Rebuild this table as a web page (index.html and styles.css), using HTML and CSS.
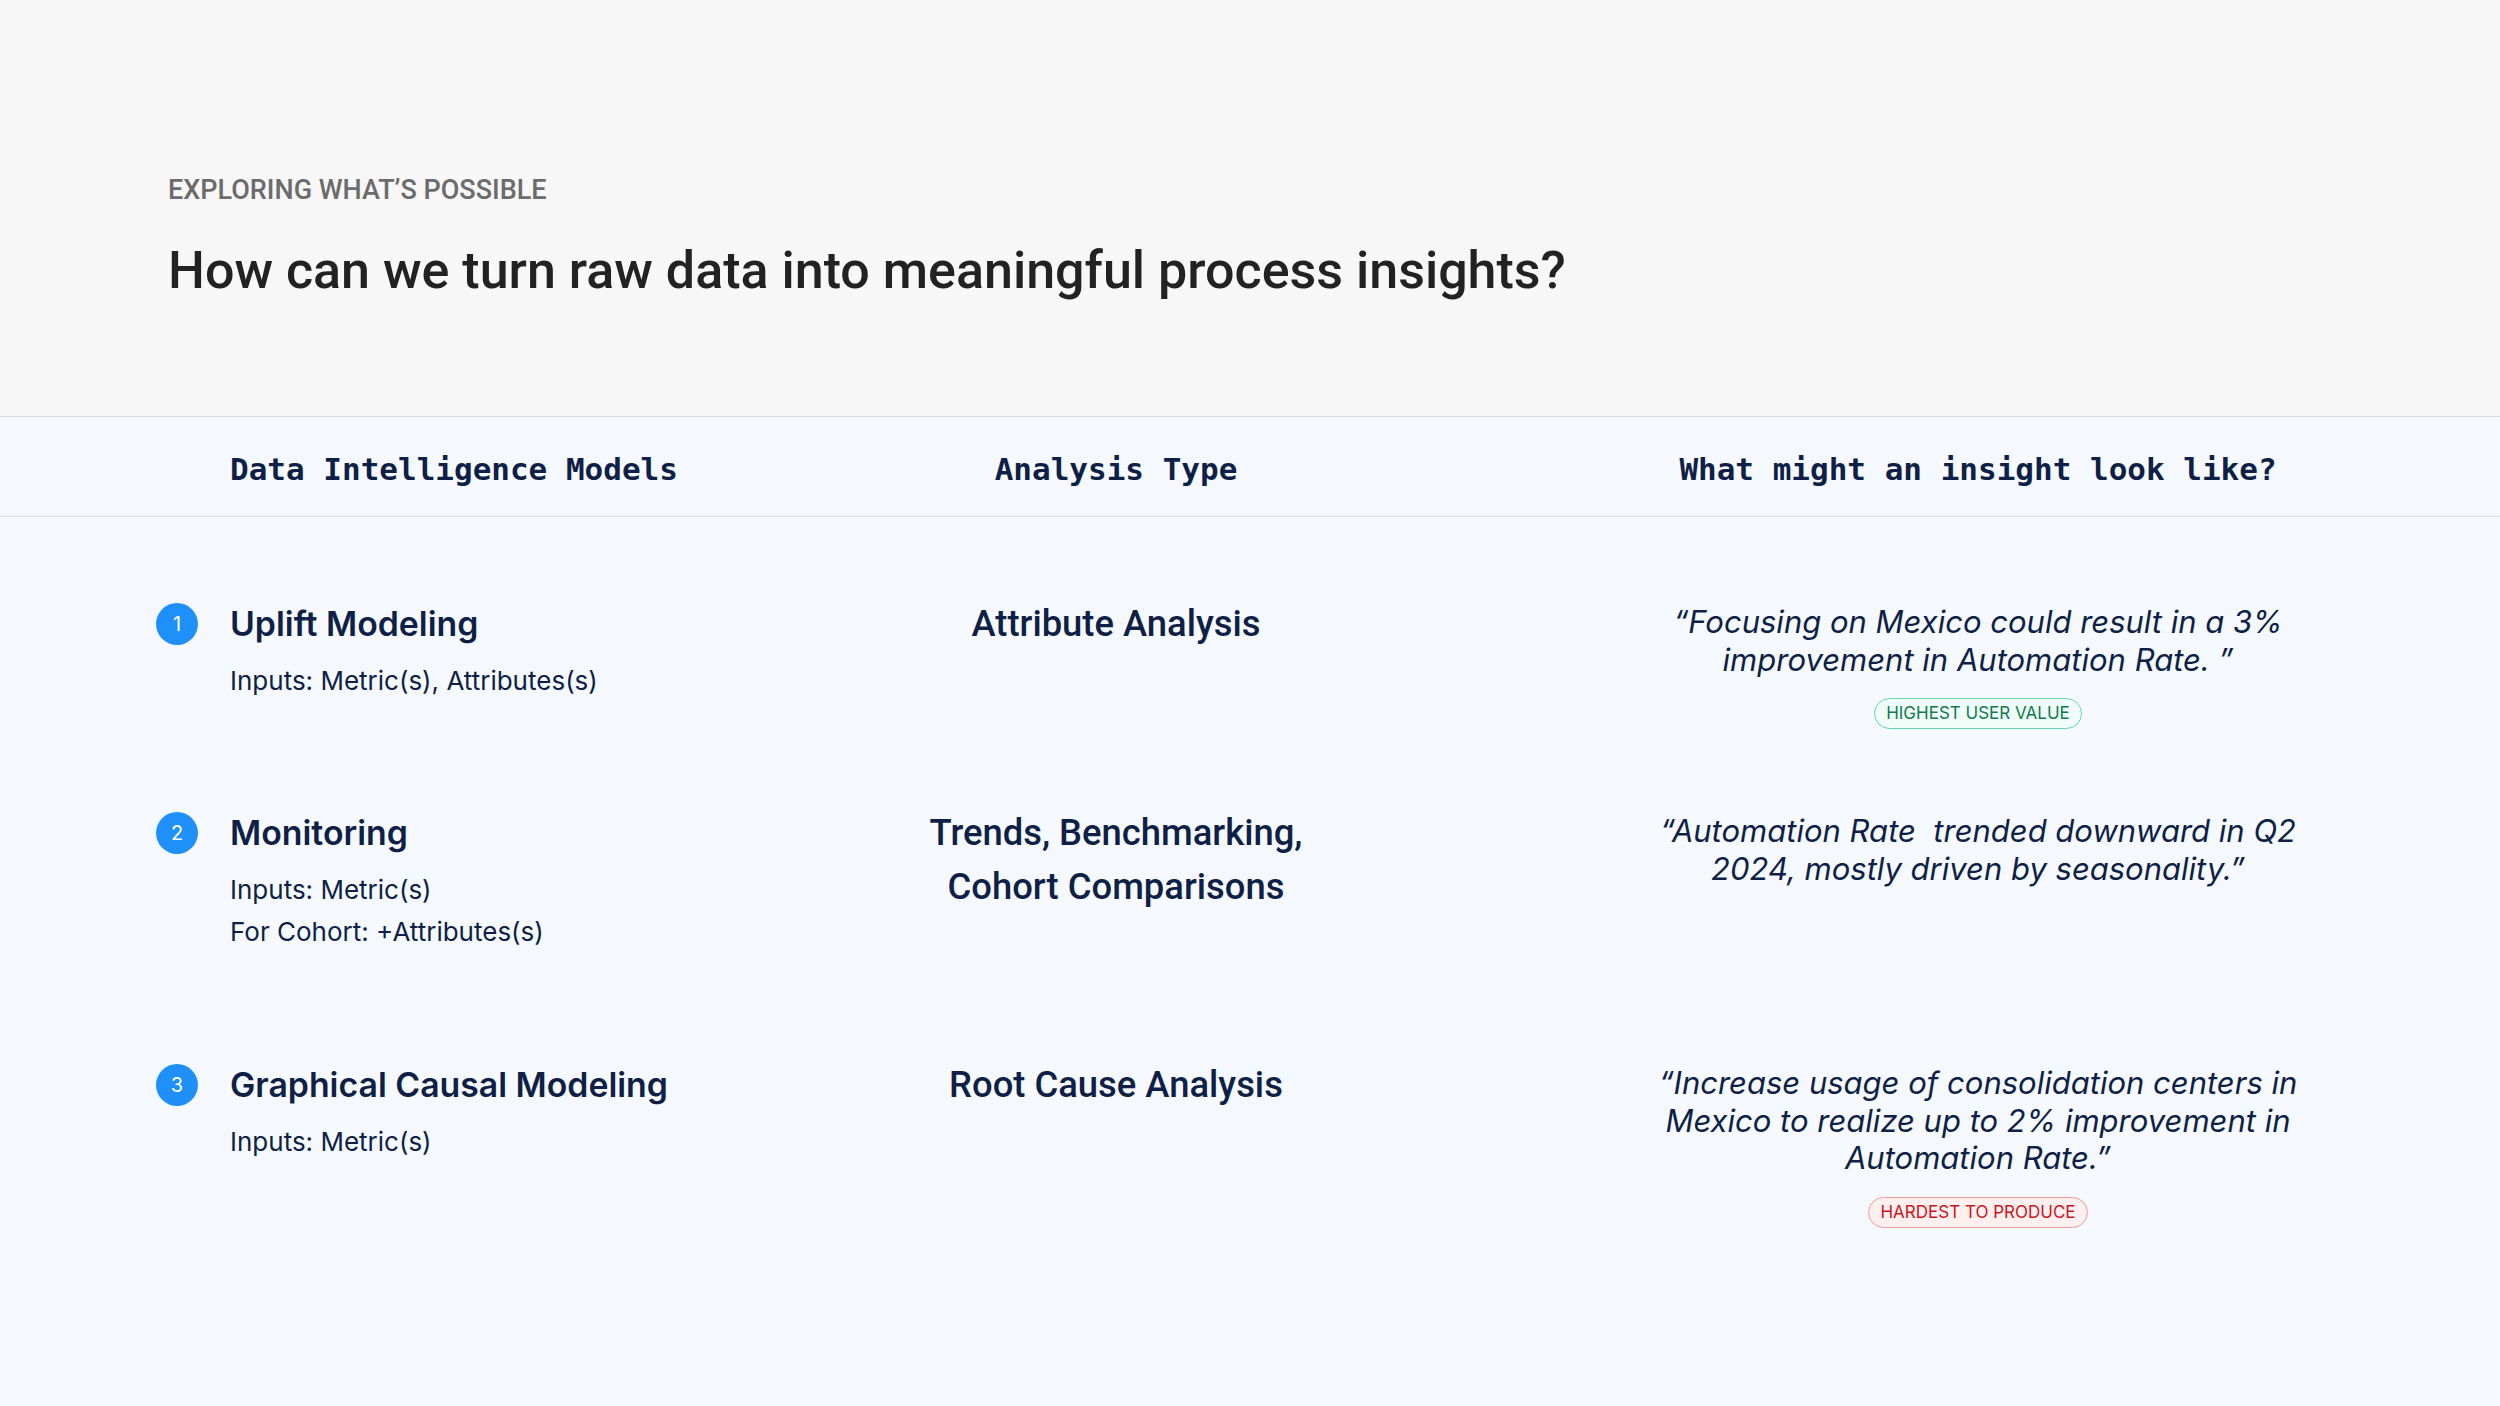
FILE: index.html
```html
<!DOCTYPE html>
<html lang="en">
<head>
<meta charset="utf-8">
<title>Exploring what's possible</title>
<link rel="stylesheet" href="styles.css">
</head>
<body>
<header class="intro">
  <p class="eyebrow">EXPLORING WHAT’S POSSIBLE</p>
  <h1 class="title">How can we turn raw data into meaningful process insights?</h1>
</header>
<main class="board">
  <div class="head-row">
    <div class="head-cell head-first">Data Intelligence Models</div>
    <div class="head-cell head-center">Analysis Type</div>
    <div class="head-cell head-center">What might an insight look like?</div>
  </div>
  <div class="rows">
    <div class="model">
      <span class="num">1</span>
      <div class="model-body">
        <h2 class="model-name">Uplift Modeling</h2>
        <p class="inputs">Inputs: Metric(s), Attributes(s)</p>
      </div>
    </div>
    <div class="analysis">Attribute Analysis</div>
    <div class="insight">
      <p class="quote">“Focusing on Mexico could result in a 3%<br>improvement in Automation Rate. ”</p>
      <span class="badge badge-green">HIGHEST USER VALUE</span>
    </div>

    <div class="model">
      <span class="num">2</span>
      <div class="model-body">
        <h2 class="model-name">Monitoring</h2>
        <p class="inputs">Inputs: Metric(s)<br>For Cohort: +Attributes(s)</p>
      </div>
    </div>
    <div class="analysis">Trends, Benchmarking,<br>Cohort Comparisons</div>
    <div class="insight">
      <p class="quote">“Automation Rate &nbsp;trended downward in Q2<br>2024, mostly driven by seasonality.”</p>
    </div>

    <div class="model">
      <span class="num">3</span>
      <div class="model-body">
        <h2 class="model-name">Graphical Causal Modeling</h2>
        <p class="inputs">Inputs: Metric(s)</p>
      </div>
    </div>
    <div class="analysis">Root Cause Analysis</div>
    <div class="insight">
      <p class="quote">“Increase usage of consolidation centers in<br>Mexico to realize up to 2% improvement in<br>Automation Rate.”</p>
      <span class="badge badge-red">HARDEST TO PRODUCE</span>
    </div>
  </div>
</main>
</body>
</html>
```
FILE: styles.css
```css
* { box-sizing: border-box; }
html, body { margin: 0; padding: 0; }
body {
  width: 2500px;
  min-height: 1406px;
  background: #f5f9fd;
  font-family: Inter, "Noto Sans", sans-serif;
  color: #0f1f45;
  display: flex;
  flex-direction: column;
}
.intro {
  background: #f7f7f7;
  padding: 174px 0 114px 168px;
  display: flex;
  flex-direction: column;
  gap: 34px;
}
.eyebrow {
  margin: 0;
  font-family: Roboto, sans-serif;
  font-weight: 500;
  font-size: 27px;
  line-height: 32px;
  color: #6b6b6b;
}
.title {
  margin: 0;
  font-family: Roboto, sans-serif;
  font-weight: 500;
  font-size: 52px;
  line-height: 62px;
  color: #222222;
}
.board {
  flex: 1;
  background: #f5f9fd;
}
.head-row {
  height: 101px;
  border-top: 1px solid #d9dce1;
  border-bottom: 1px solid #d9dce1;
  display: grid;
  grid-template-columns: 529px 862px 862px;
  padding-left: 156px;
  align-items: center;
}
.head-cell {
  font-family: "DejaVu Sans Mono", "Liberation Mono", monospace;
  font-weight: 700;
  font-size: 31px;
  color: #0f1f45;
  padding-top: 4px;
}
.head-first { padding-left: 74px; }
.head-center { text-align: center; }
.rows {
  display: grid;
  grid-template-columns: 529px 862px 862px;
  grid-template-rows: 209px 252px auto;
  padding: 86px 0 0 156px;
  align-items: start;
}
.model {
  display: flex;
  gap: 32px;
  align-items: flex-start;
}
.num {
  flex: none;
  width: 42px;
  height: 42px;
  border-radius: 50%;
  background: #1f8ffa;
  color: #ffffff;
  font-size: 20px;
  display: flex;
  align-items: center;
  justify-content: center;
}
.model-body { display: flex; flex-direction: column; }
.model-name {
  margin: 0;
  font-weight: 600;
  font-size: 33.8px;
  line-height: 42px;
  color: #0f1f45;
}
.inputs {
  margin: 15px 0 0;
  font-size: 26px;
  line-height: 42px;
  color: #0f1f45;
}
.analysis {
  margin-top: -6px;
  text-align: center;
  font-family: Roboto, sans-serif;
  font-weight: 500;
  font-size: 36.4px;
  line-height: 54px;
  color: #0f1f45;
}
.insight {
  display: flex;
  flex-direction: column;
  align-items: center;
  gap: 20px;
}
.quote {
  margin: 0;
  text-align: center;
  font-style: italic;
  font-size: 31px;
  line-height: 37.5px;
  color: #0f1f45;
}
.badge {
  height: 31px;
  padding: 0 11px;
  border-radius: 16px;
  font-size: 17px;
  line-height: 28px;
  border: 1.5px solid;
}
.badge-green {
  color: #117a50;
  border-color: #63d9b1;
  background: #effcf7;
}
.badge-red {
  color: #c8161d;
  border-color: #f09a9a;
  background: #fff0ef;
}
```
